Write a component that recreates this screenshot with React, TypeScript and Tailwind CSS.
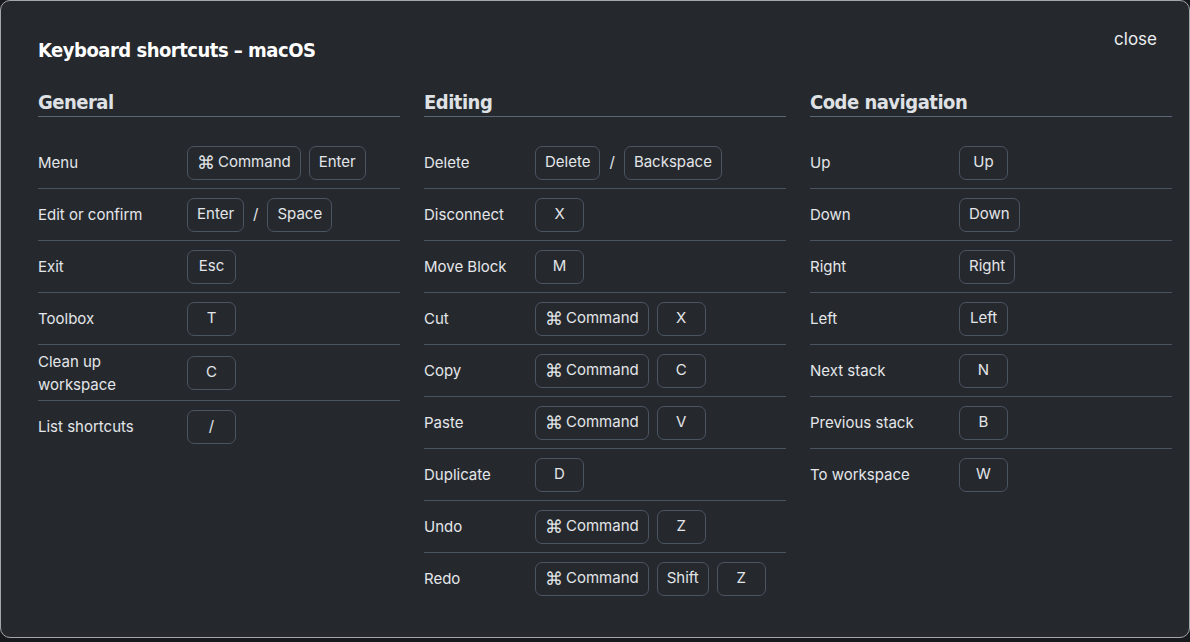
type Row = { label: string; keys: string[] };

const general: Row[] = [
  { label: "Menu", keys: ["⌘Command", "Enter"] },
  { label: "Edit or confirm", keys: ["Enter", "/", "Space"] },
  { label: "Exit", keys: ["Esc"] },
  { label: "Toolbox", keys: ["T"] },
  { label: "Clean up workspace", keys: ["C"] },
  { label: "List shortcuts", keys: ["/"] },
];

const editing: Row[] = [
  { label: "Delete", keys: ["Delete", "/", "Backspace"] },
  { label: "Disconnect", keys: ["X"] },
  { label: "Move Block", keys: ["M"] },
  { label: "Cut", keys: ["⌘Command", "X"] },
  { label: "Copy", keys: ["⌘Command", "C"] },
  { label: "Paste", keys: ["⌘Command", "V"] },
  { label: "Duplicate", keys: ["D"] },
  { label: "Undo", keys: ["⌘Command", "Z"] },
  { label: "Redo", keys: ["⌘Command", "Shift", "Z"] },
];

const navigation: Row[] = [
  { label: "Up", keys: ["Up"] },
  { label: "Down", keys: ["Down"] },
  { label: "Right", keys: ["Right"] },
  { label: "Left", keys: ["Left"] },
  { label: "Next stack", keys: ["N"] },
  { label: "Previous stack", keys: ["B"] },
  { label: "To workspace", keys: ["W"] },
];

const headingFont = "font-['DejaVu_Sans_Condensed','DejaVu_Sans',sans-serif] [font-stretch:condensed]";

function Key({ label }: { label: string }) {
  const command = label.startsWith("⌘");
  return (
    <kbd className="flex h-[34px] min-w-[49px] items-center justify-center rounded-[7px] border border-[#4b5462] px-[9px] font-['Inter',sans-serif] text-[15px] text-[#e3e5e8]">
      {command && (
        <span className="mr-[3px] font-['DejaVu_Sans',sans-serif] text-[18px] font-light leading-none">⌘</span>
      )}
      {command ? label.slice(1) : label}
    </kbd>
  );
}

function Section({ title, rows, labelWidth }: { title: string; rows: Row[]; labelWidth: string }) {
  return (
    <section>
      <h2
        className={`${headingFont} border-b border-[#5b6677] text-[20px] font-bold leading-[28px] tracking-[-0.5px] text-[#dfe1e5]`}
      >
        {title}
      </h2>
      <div className="mt-[20px]">
        {rows.map((row, i) => (
          <div
            key={row.label}
            className={`flex items-center py-[4.5px] ${i < rows.length - 1 ? "border-b border-[#4a5361]" : ""}`}
          >
            <div className={`${labelWidth} shrink-0`}>
              <div className="max-w-[110px] text-[15px] leading-[23px] text-[#e4e6e9]">{row.label}</div>
            </div>
            <div className="flex items-center gap-[8px] py-[4px]">
              {row.keys.map((k, j) =>
                k === "/" && row.keys.length > 1 ? (
                  <span key={j} className="mx-[1px] text-[15px] text-[#e4e6e9]">
                    /
                  </span>
                ) : (
                  <Key key={j} label={k} />
                )
              )}
            </div>
          </div>
        ))}
      </div>
    </section>
  );
}

export default function App() {
  return (
    <div className="h-[642px] w-[1190px] overflow-hidden bg-[#17191c] font-['Inter',sans-serif]">
      <div className="h-[638px] rounded-[10px] border border-[#a3a6aa] bg-[#25292e] pl-[37px] pr-[17px] pt-[32px]">
        <div className="flex items-start justify-between">
          <h1 className={`${headingFont} text-[20px] font-bold leading-[34px] tracking-[-0.5px] text-white`}>
            Keyboard shortcuts – macOS
          </h1>
          <button className="-mt-[3px] mr-[-1px] px-[16px] text-[17px] leading-[18px] text-[#eceef0]">close</button>
        </div>
        <div className="mt-[21px] grid grid-cols-3 gap-[24px]">
          <Section title="General" rows={general} labelWidth="w-[149px]" />
          <Section title="Editing" rows={editing} labelWidth="w-[111px]" />
          <Section title="Code navigation" rows={navigation} labelWidth="w-[149px]" />
        </div>
      </div>
    </div>
  );
}
